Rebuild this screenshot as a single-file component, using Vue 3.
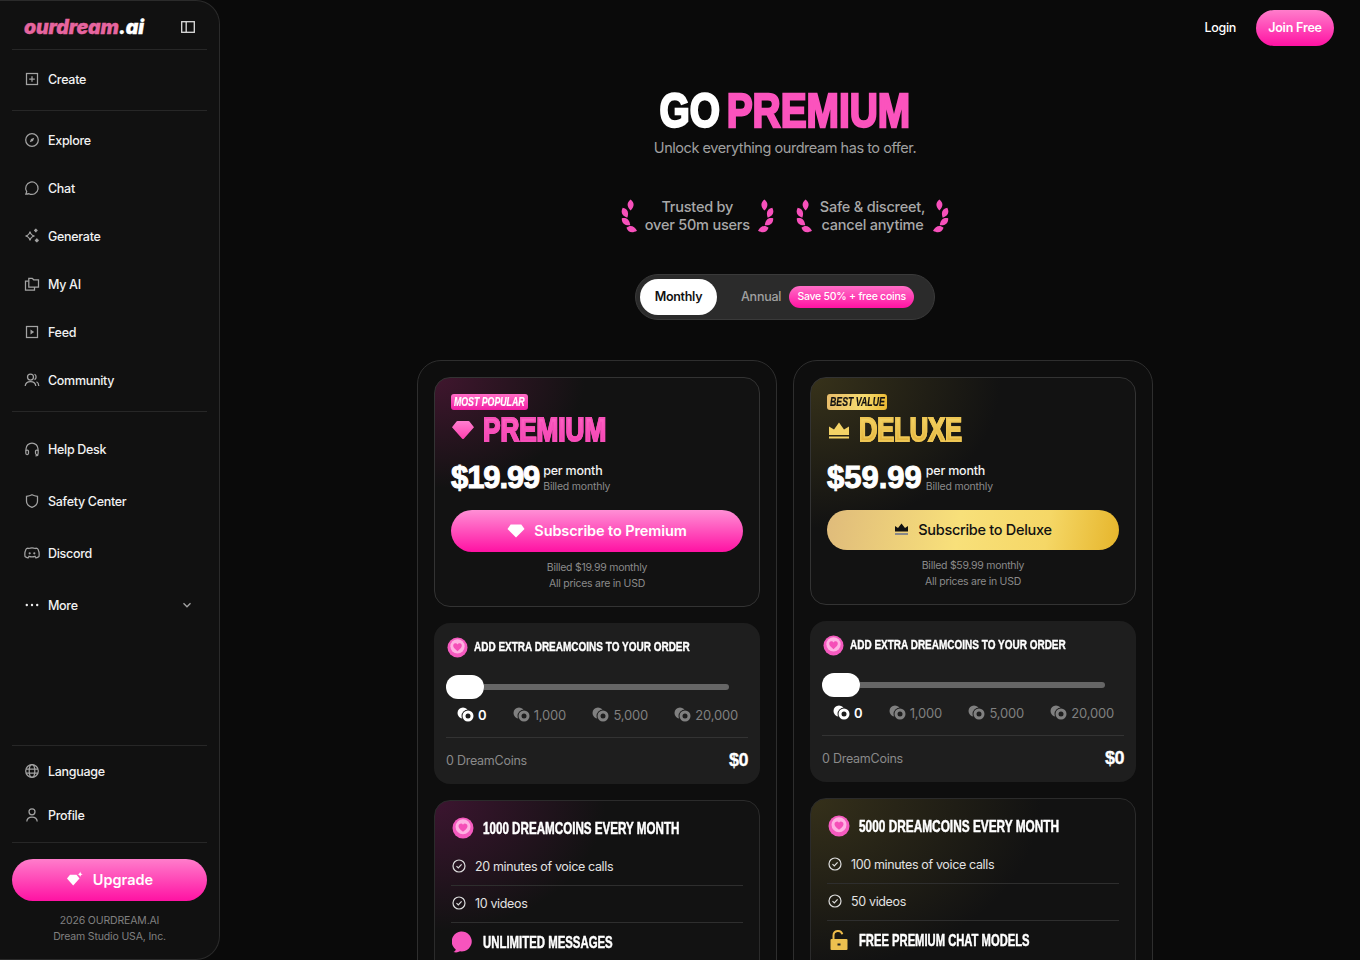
<script setup>
const icons = {
  create: '<rect x="2.5" y="2.5" width="11" height="11"/><path d="M8 5.2v5.6M5.2 8h5.6"/>',
  explore: '<circle cx="8" cy="8" r="6.3"/><path d="M10.2 5.8 9 9 5.8 10.2 7 7Z" fill="#a3a3a3" stroke="none"/>',
  chat: '<path d="M1.8 14.2l.9-2.6A6.2 6.2 0 1 1 5 13.7a9 9 0 0 1-3.2.5Z"/>',
  generate: '<path d="M6 3.500c.5 2.600 1.900 4 4.500 4.500-2.600.5-4 1.900-4.500 4.500C5.500 9.900 4.100 8.500 1.500 8 4.100 7.500 5.500 6.100 6 3.500Z"/><path d="M11.800.8c.1 1.100.6 1.600 1.700 1.700-1.100.1-1.600.6-1.700 1.700-.1-1.100-.6-1.600-1.700-1.700 1.100-.1 1.600-.6 1.700-1.700ZM12.800 10.500c.1 1.200.7 1.800 1.900 1.900-1.200.1-1.800.7-1.900 1.900-.1-1.200-.7-1.800-1.900-1.900 1.200-.1 1.800-.7 1.900-1.900Z" fill="#a3a3a3"/>',
  myai: '<path d="M4.500 5H1.500v9h9v-3"/><path d="M4.800 5V2.300h3.400l1.500 1.500h4.800v7.200H4.800Z"/>',
  feed: '<rect x="2.500" y="2.500" width="11" height="11"/><path d="M6.500 5.500 10.200 8 6.500 10.500Z" fill="#a3a3a3" stroke="none"/>',
  community: '<circle cx="6.500" cy="5" r="3"/><path d="M1.200 14c.3-3 2.300-4.500 5.300-4.500s5 1.500 5.300 4.500"/><path d="M10.500 2.300a3 3 0 0 1 0 5.300M12.500 9.800c1.300.6 2.200 2.100 2.300 4.200"/>',
  help: '<path d="M2 10V8a6 6 0 0 1 12 0v2"/><rect x="1.800" y="9" width="2.700" height="4.500" rx="1.200"/><rect x="11.500" y="9" width="2.700" height="4.500" rx="1.200"/><path d="M14 13.500c0 .9-1 1.300-2.500 1.300"/>',
  safety: '<path d="M8 1.800c1.800 1 3.500 1.400 5.500 1.500v5c0 3-2.300 5-5.500 6-3.200-1-5.500-3-5.500-6v-5c2-.1 3.700-.5 5.500-1.500Z"/>',
  discord: '<path d="M4.800 3.500 4 3.200C3 3.400 2.300 3.800 2 4.300.9 6.500.6 9 1 11.500c1 .9 2 1.300 3 1.500l1-1.700c1.900.6 4.100.6 6 0l1 1.700c1-.2 2-.6 3-1.500.4-2.500.1-5-1-7.200-.3-.5-1-.9-2-1.100l-.8.3a10 10 0 0 0-6.400 0Z"/><circle cx="5.700" cy="8.300" r="1.100" fill="#a3a3a3" stroke="none"/><circle cx="10.300" cy="8.300" r="1.100" fill="#a3a3a3" stroke="none"/>',
  more: '<circle cx="2.800" cy="8" r="1.200" fill="#eee" stroke="none"/><circle cx="8" cy="8" r="1.200" fill="#eee" stroke="none"/><circle cx="13.200" cy="8" r="1.200" fill="#eee" stroke="none"/>',
  language: '<circle cx="8" cy="8" r="6.300"/><ellipse cx="8" cy="8" rx="2.800" ry="6.300"/><path d="M2 6h12M2 10h12"/>',
  profile: '<circle cx="8" cy="4.800" r="3"/><path d="M2.800 14.500c.2-3 2.200-4.500 5.200-4.500s5 1.500 5.200 4.500"/>'
}
const leaf = 'c4 3 4 7 0 11c-4-4-4-8 0-11Z'
const laurel = `<g fill="#f750bb"><path d="M9.600 .6${leaf}"/><path transform="rotate(-25 4 13.700)" d="M4 8.200${leaf}"/><path transform="rotate(-50 5 22.700)" d="M5 17.200${leaf}"/><path transform="rotate(-74 10.700 30.300)" d="M10.700 24.800${leaf}"/></g>`
const group1 = [['create', 'Create']]
const group2 = [['explore', 'Explore'], ['chat', 'Chat'], ['generate', 'Generate'], ['myai', 'My AI'], ['feed', 'Feed'], ['community', 'Community']]
const group3 = [['help', 'Help Desk'], ['safety', 'Safety Center'], ['discord', 'Discord'], ['more', 'More']]
const group4 = [['language', 'Language'], ['profile', 'Profile']]
const trust = [['Trusted by', 'over 50m users'], ['Safe & discreet,', 'cancel anytime']]
const coinStops = ['0', '1,000', '5,000', '20,000']
const plans = [
  { key: 'premium', tag: 'MOST POPULAR', name: 'PREMIUM', price: '$19.99', cta: 'Subscribe to Premium', bill: 'Billed $19.99 monthly', coins: '1000 DREAMCOINS EVERY MONTH', voice: '20 minutes of voice calls', videos: '10 videos', extra: 'UNLIMITED MESSAGES' },
  { key: 'deluxe', tag: 'BEST VALUE', name: 'DELUXE', price: '$59.99', cta: 'Subscribe to Deluxe', bill: 'Billed $59.99 monthly', coins: '5000 DREAMCOINS EVERY MONTH', voice: '100 minutes of voice calls', videos: '50 videos', extra: 'FREE PREMIUM CHAT MODELS' }
]
</script>

<template>
  <div class="app">
    <aside class="side">
      <div class="brand">
        <span class="logo"><span class="logo-pink">ourdream</span>.ai</span>
        <svg class="toggle-ico" width="16" height="16" viewBox="0 0 16 16"><rect x="1.700" y="2.700" width="12.600" height="10.600" fill="none" stroke="#ddd" stroke-width="1.300"/><path d="M6.200 2.700v10.600" stroke="#ddd" stroke-width="1.300"/></svg>
      </div>
      <nav class="sec sec-create">
        <a v-for="n in group1" :key="n[1]" class="item h60"><svg class="ico" viewBox="0 0 16 16" v-html="icons[n[0]]"></svg><span>{{ n[1] }}</span></a>
      </nav>
      <nav class="sec sec-main">
        <a v-for="n in group2" :key="n[1]" class="item h48"><svg class="ico" viewBox="0 0 16 16" v-html="icons[n[0]]"></svg><span>{{ n[1] }}</span></a>
      </nav>
      <nav class="sec-help">
        <a v-for="n in group3" :key="n[1]" class="item h52">
          <svg class="ico" viewBox="0 0 16 16" v-html="icons[n[0]]"></svg><span>{{ n[1] }}</span>
          <svg v-if="n[0] === 'more'" class="chev" width="10" height="10" viewBox="0 0 10 10"><path d="M1.500 3.200 5 6.800l3.500-3.600" fill="none" stroke="#a3a3a3" stroke-width="1.300"/></svg>
        </a>
      </nav>
      <div class="spacer"></div>
      <nav class="sec sec-bottom">
        <a v-for="n in group4" :key="n[1]" class="item h44"><svg class="ico" viewBox="0 0 16 16" v-html="icons[n[0]]"></svg><span>{{ n[1] }}</span></a>
      </nav>
      <button class="upgrade">
        <svg width="18" height="17" viewBox="0 0 18 17"><path d="M1 7.500 4 3.800h6.500l3 3.700-6.300 7Z" fill="#fff"/><path d="M14.200.5c.2 1.700 1 2.500 2.800 2.800-1.800.3-2.600 1.100-2.800 2.800-.3-1.700-1.100-2.500-2.800-2.800 1.700-.3 2.500-1.100 2.800-2.800Z" fill="#fff"/></svg>
        <span>Upgrade</span>
      </button>
      <p class="copy">2026 OURDREAM.AI<br>Dream Studio USA, Inc.</p>
    </aside>

    <main class="main">
      <header class="top">
        <a class="login">Login</a>
        <button class="join">Join Free</button>
      </header>

      <h1 class="title">GO <span class="pink">PREMIUM</span></h1>
      <p class="sub">Unlock everything ourdream has to offer.</p>

      <div class="trust">
        <div v-for="t in trust" :key="t[0]" class="trust-item">
          <svg class="laurel" width="16" height="34" viewBox="0 0 16 34" v-html="laurel"></svg>
          <p>{{ t[0] }}<br>{{ t[1] }}</p>
          <svg class="laurel flip" width="16" height="34" viewBox="0 0 16 34" v-html="laurel"></svg>
        </div>
      </div>

      <div class="period">
        <span class="monthly">Monthly</span>
        <span class="annual">Annual</span>
        <span class="save">Save 50% + free coins</span>
      </div>

      <section class="plans">
        <article v-for="p in plans" :key="p.key" class="plan" :class="p.key">
          <div class="head">
            <span class="tag"><span class="cond">{{ p.tag }}</span></span>
            <div class="name-row">
              <svg v-if="p.key === 'premium'" width="24" height="20" viewBox="0 0 24 20"><defs><linearGradient id="dia" x1="0" y1="0" x2="0" y2="1"><stop offset="0" stop-color="#ff7fd0"/><stop offset="1" stop-color="#ff3fae"/></linearGradient></defs><path d="M1 7.200 5.500 1.500a1.500 1.500 0 0 1 1-.5h11a1.500 1.500 0 0 1 1 .5L23 7.200 13 18.500a1.300 1.300 0 0 1-2 0Z" fill="url(#dia)"/></svg>
              <svg v-else width="24" height="20" viewBox="0 0 24 20"><path d="M2 15 2 6.500 7 9.500 12 2.500 17 9.500 22 6.500 22 15Z" fill="#f2d266"/><rect x="2" y="16.500" width="20" height="2" fill="#f2d266"/></svg>
              <h2 class="name cond">{{ p.name }}</h2>
            </div>
            <div class="price-row">
              <strong class="price">{{ p.price }}</strong>
              <div class="per"><b>per month</b><small>Billed monthly</small></div>
            </div>
            <button class="cta">
              <svg v-if="p.key === 'premium'" width="18" height="14" viewBox="0 0 18 14"><path d="M.5 5 3.700.5h10.600L17.500 5 9 13.500Z" fill="#fff"/></svg>
              <svg v-else width="15" height="13" viewBox="0 0 15 13"><path d="M1 8.500V3l3 2L7.500.5 11 5l3-2v5.500Z" fill="#111"/><rect x="1" y="10" width="13" height="2" fill="#888"/></svg>
              <span>{{ p.cta }}</span>
            </button>
            <p class="note">{{ p.bill }}<br>All prices are in USD</p>
          </div>

          <div class="addon">
            <div class="addon-title">
              <svg class="coin" width="21" height="21" viewBox="0 0 22 22"><circle cx="11" cy="11" r="10.500" fill="#f55abf"/><circle cx="11" cy="9.800" r="7.500" fill="#ffb0e2"/><path d="M11 14.800C7.500 12.300 6.500 10.500 6.500 9a2.400 2.400 0 0 1 4.500-1.200A2.400 2.400 0 0 1 15.500 9c0 1.500-1 3.300-4.500 5.800Z" fill="#f54fb8"/></svg>
              <span class="cond">ADD EXTRA DREAMCOINS TO YOUR ORDER</span>
            </div>
            <div class="slider"><i class="knob"></i><i class="track"></i></div>
            <div class="stops">
              <span v-for="(s, i) in coinStops" :key="s" class="stop" :class="{ on: i === 0 }">
                <svg width="17" height="15" viewBox="0 0 17 15"><circle cx="6" cy="6" r="5.500" fill="currentColor"/><circle cx="11" cy="9" r="6.500" fill="#1e1e1e"/><circle cx="11" cy="9" r="5.500" fill="currentColor"/><circle cx="11" cy="9" r="2.500" fill="#1e1e1e"/></svg>
                {{ s }}
              </span>
            </div>
            <div class="total"><span>0 DreamCoins</span><strong>$0</strong></div>
          </div>

          <div class="perks">
            <div class="perk-title first">
              <svg class="coin" width="22" height="22" viewBox="0 0 22 22"><circle cx="11" cy="11" r="10.500" fill="#f55abf"/><circle cx="11" cy="9.800" r="7.500" fill="#ffb0e2"/><path d="M11 14.800C7.500 12.300 6.500 10.500 6.500 9a2.400 2.400 0 0 1 4.500-1.200A2.400 2.400 0 0 1 15.500 9c0 1.500-1 3.300-4.500 5.800Z" fill="#f54fb8"/></svg>
              <span class="cond">{{ p.coins }}</span>
            </div>
            <div class="perk"><svg width="14" height="14" viewBox="0 0 14 14"><circle cx="7" cy="7" r="6" fill="none" stroke="#ddd" stroke-width="1.200"/><path d="M4.500 7.200 6.300 9l3.300-3.600" fill="none" stroke="#ddd" stroke-width="1.200"/></svg>{{ p.voice }}</div>
            <div class="perk"><svg width="14" height="14" viewBox="0 0 14 14"><circle cx="7" cy="7" r="6" fill="none" stroke="#ddd" stroke-width="1.200"/><path d="M4.500 7.200 6.300 9l3.300-3.600" fill="none" stroke="#ddd" stroke-width="1.200"/></svg>{{ p.videos }}</div>
            <div class="perk-title extra">
              <svg v-if="p.key === 'premium'" width="22" height="22" viewBox="0 0 22 22"><path d="M1.500 21c1.300-.6 2-1.500 2.300-2.500A10 10 0 1 1 8 20.300 8 8 0 0 1 1.500 21Z" fill="#f754bd"/></svg>
              <svg v-else width="22" height="22" viewBox="0 0 22 22"><path d="M5.500 10V6.500a4.500 4.500 0 0 1 8.800-1.300" fill="none" stroke="#eebc4a" stroke-width="2"/><rect x="2.500" y="10" width="17" height="11" rx="1" fill="#ecc04f"/><rect x="9.500" y="14.500" width="3" height="2" fill="#222"/></svg>
              <span class="cond">{{ p.extra }}</span>
            </div>
          </div>
        </article>
      </section>
    </main>
  </div>
</template>

<style>
html, body { margin: 0; background: #0a0a0a; }
</style>

<style scoped>
.app { display: flex; height: 960px; overflow: hidden; background: #0a0a0a; color: #fff; font-family: Inter, "Liberation Sans", sans-serif; }
.side { box-sizing: border-box; width: 220px; height: 960px; flex: none; display: flex; flex-direction: column; padding: 0 12px; background: #111; border: 1px solid #2b2b2b; border-left: 0; border-radius: 0 24px 24px 0; }
.brand { box-sizing: border-box; height: 49px; display: flex; align-items: center; justify-content: space-between; padding: 4px 11px 0 12px; border-bottom: 1px solid #272727; }
.logo { font-size: 19.500px; font-weight: 900; font-style: italic; letter-spacing: -.15px; color: #fff; white-space: nowrap; -webkit-text-stroke: .3px currentColor; }
.logo-pink { color: #e6659f; }
.sec { border-bottom: 1px solid #272727; }
.item { display: flex; align-items: center; gap: 8px; padding-left: 12px; font-size: 12.500px; font-weight: 500; letter-spacing: -.3px; color: #f2f2f2; }
.h60 { box-sizing: border-box; height: 60px; padding-bottom: 2px; }
.h48 { height: 48px; }
.h52 { height: 52px; }
.h44 { height: 44px; }
.sec-main { padding: 5px 0 7px; }
.sec-help { padding-top: 11px; }
.sec-bottom { border-top: 1px solid #272727; padding: 3px 0 5px; }
.sec-bottom + .upgrade { margin-top: 16px; }
.ico { width: 16px; height: 16px; flex: none; fill: none; stroke: #a3a3a3; stroke-width: 1.250; }
.chev { margin-left: auto; margin-right: 15px; }
.spacer { flex: 1; }
.upgrade { box-sizing: border-box; height: 42px; border: 0; border-radius: 21px; display: flex; align-items: center; justify-content: center; gap: 9px; padding: 0 0 2px; background: linear-gradient(180deg, #ff7dcb, #ff12a3); color: #fff; font: 600 14.500px Inter, sans-serif; flex: none; }
.copy { margin: 12px 0 14px; text-align: center; font-size: 10.500px; line-height: 16px; color: #808080; letter-spacing: -.15px; }

.main { flex: 1; display: flex; flex-direction: column; align-items: center; padding-right: 10px; }
.top { align-self: stretch; height: 56px; display: flex; align-items: center; justify-content: flex-end; gap: 20px; padding: 0 16px 0 0; box-sizing: border-box; flex: none; }
.login { font-size: 12.500px; font-weight: 500; letter-spacing: -.3px; padding-bottom: 1px; }
.join { width: 78px; height: 36px; border: 0; border-radius: 18px; background: linear-gradient(180deg, #ff7dcb, #ff12a3); color: #fff; font: 600 12.500px Inter, sans-serif; letter-spacing: -.2px; padding: 0 0 1px; }
.title { margin: 30px 0 0; font: 700 48px/50px "Liberation Sans", sans-serif; word-spacing: -5px; -webkit-text-stroke: 2.400px currentColor; transform: scaleX(.81); white-space: nowrap; }
.pink { color: #fb53bd; }
.sub { margin: 2px 0 0; font-size: 14.500px; line-height: 20px; color: #a0a0a0; letter-spacing: -.45px; }
.trust { display: flex; gap: 22px; margin-top: 40px; }
.trust-item { display: flex; align-items: center; gap: 8px; }
.trust-item p { margin: 0; font-size: 14.500px; line-height: 18px; color: #a8a8a8; text-align: center; font-weight: 500; white-space: nowrap; letter-spacing: -.22px; }
.flip { transform: scaleX(-1); }
.period { box-sizing: border-box; margin-top: 40px; width: 300px; height: 46px; display: flex; align-items: center; padding: 0 4px; background: #2b2b2b; border: 1px solid #3a3a3a; border-radius: 23px; flex: none; }
.monthly { box-sizing: border-box; width: 77px; height: 36px; padding-bottom: 1px; border-radius: 18px; background: #fff; color: #111; font-size: 12.500px; font-weight: 600; letter-spacing: -.3px; display: flex; align-items: center; justify-content: center; }
.annual { margin-left: 24px; padding-bottom: 1px; font-size: 12.500px; font-weight: 500; color: #a0a0a0; letter-spacing: -.25px; }
.save { box-sizing: border-box; margin-left: 8px; width: 125px; height: 22px; padding-bottom: 1px; border-radius: 11px; background: linear-gradient(180deg, #ff6ec6, #ff12a3); font-size: 10.500px; font-weight: 500; letter-spacing: -.25px; display: flex; align-items: center; justify-content: center; }

.cond { display: inline-block; white-space: nowrap; transform-origin: left center; }
.plans { margin-top: 40px; display: grid; grid-template-columns: 360px 360px; gap: 16px; align-items: start; flex: none; }
.plan { box-sizing: border-box; padding: 16px; background: #0e0e0e; border: 1px solid #2e2e2e; border-radius: 24px; height: 720px; display: flex; flex-direction: column; gap: 16px; }
.head { padding: 16px 16px 0; border: 1px solid #333; border-radius: 16px; background-color: #121212; flex: none; }
.premium .head { height: 230px; box-sizing: border-box; background-image: radial-gradient(150px 110px at 0 0, #40162e, transparent); }
.deluxe .head { height: 228px; box-sizing: border-box; background-image: radial-gradient(190px 150px at 0 0, #37321a, transparent); }
.tag { display: block; height: 16px; padding: 0 3px; border-radius: 3px; font: italic 700 12px/16px "Liberation Sans", sans-serif; overflow: hidden; box-sizing: border-box; }
.tag .cond { transform: scaleX(.73); -webkit-text-stroke: .2px currentColor; }
.premium .tag { width: 77px; background: linear-gradient(180deg, #ff6ec6, #f21fa5); color: #fff; }
.deluxe .tag { width: 60px; background: linear-gradient(100deg, #e6bb6a, #f7dc70 60%, #e9b730); color: #111; }
.name-row { display: flex; align-items: center; gap: 8px; height: 30px; margin-top: 5px; }
.name { margin: 0; font: 700 33px/30px "Liberation Sans", sans-serif; background-clip: text; -webkit-background-clip: text; color: transparent; }
.premium .name { transform: scaleX(.79); background-image: linear-gradient(180deg, #ff66c4, #f13fb0); -webkit-text-stroke: 1.800px #f74fb9; }
.deluxe .name { transform: scaleX(.77); background-image: linear-gradient(180deg, #f5d76a, #e0ad35); -webkit-text-stroke: 1.800px #eec654; }
.price-row { display: flex; align-items: center; gap: 4px; height: 36px; margin-top: 15px; }
.price { font: 700 31px/36px "Liberation Sans", sans-serif; letter-spacing: -1.100px; -webkit-text-stroke: 1px #fff; }
.deluxe .price { letter-spacing: 0; }
.per { display: flex; flex-direction: column; }
.per b { font-size: 12.500px; font-weight: 500; line-height: 16px; color: #f2f2f2; letter-spacing: -.22px; }
.per small { font-size: 10.500px; line-height: 15px; color: #8a8a8a; letter-spacing: -.2px; }
.cta { width: 292px; border: 0; border-radius: 21px; display: flex; align-items: center; justify-content: center; gap: 9px; margin-top: 14px; padding: 0 0 1px; }
.premium .cta { height: 42px; background: linear-gradient(180deg, #ff8fd5, #ff12a3); color: #fff; font: 600 14.500px Inter, sans-serif; letter-spacing: -.1px; }
.deluxe .cta { height: 40px; background: linear-gradient(100deg, #dfbb7b, #f8e07a 45%, #f5d766 75%, #e6b52b); color: #111; font: 500 14.500px Inter, sans-serif; letter-spacing: -.3px; }
.note { margin: 8px 0 0; text-align: center; font-size: 10.500px; line-height: 16px; color: #8a8a8a; letter-spacing: -.27px; }
.addon { box-sizing: border-box; height: 161px; padding: 12px 12px 0; border-radius: 16px; background: #1e1e1e; flex: none; }
.addon-title { display: flex; align-items: center; gap: 5px; height: 24px; font: 700 13.500px/24px "Liberation Sans", sans-serif; }
.addon-title .cond { transform: scaleX(.74); -webkit-text-stroke: .4px #fff; }
.addon-title .coin { margin-left: 1px; margin-right: 1px; flex: none; }
.slider { display: flex; align-items: center; height: 24px; margin-top: 16px; padding-right: 19px; }
.knob { width: 38px; height: 24px; border-radius: 12px; background: #fff; flex: none; }
.track { flex: 1; height: 6px; background: #666; border-radius: 0 3px 3px 0; }
.stops { display: flex; justify-content: space-between; padding: 0 10px 0 11px; margin-top: 6px; height: 19px; align-items: center; }
.stop { display: flex; align-items: center; gap: 4px; font-size: 13px; color: #808080; letter-spacing: -.2px; }
.stop.on { color: #fff; font-weight: 600; }
.total { display: flex; align-items: center; justify-content: space-between; margin-top: 13px; border-top: 1px solid #333; height: 45px; font-size: 12.500px; color: #8a8a8a; letter-spacing: -.25px; }
.total strong { font: 700 18px "Liberation Sans", sans-serif; color: #fff; letter-spacing: -.5px; -webkit-text-stroke: .3px #fff; }
.perks { padding: 0 16px; border: 1px solid #2b2b2b; border-radius: 16px; background-color: #121212; flex: 1; }
.premium .perks { background-image: radial-gradient(170px 130px at 0 0, #3c1530, transparent); }
.deluxe .perks { background-image: radial-gradient(230px 170px at 0 0, #35301a, transparent); }
.perk-title { display: flex; align-items: center; gap: 10px; font: 700 16.500px/22px "Liberation Sans", sans-serif; height: 40px; }
.perk-title svg { flex: none; margin-left: 1px; }
.perk-title .cond { transform: scaleX(.705); -webkit-text-stroke: .5px #fff; margin-left: -1px; }
.deluxe .first .cond { transform: scaleX(.718); }
.premium .extra .cond { transform: scaleX(.69); }
.deluxe .extra .cond { transform: scaleX(.68); }
.perk-title.first { box-sizing: border-box; height: 48px; padding-top: 6px; }
.perk-title.extra { box-sizing: border-box; padding-bottom: 2px; }
.perk { box-sizing: border-box; display: flex; align-items: center; gap: 9px; height: 37px; padding: 0 0 2px 1px; border-bottom: 1px solid #2e2e2e; font-size: 12.500px; color: #e2e2e2; letter-spacing: -.35px; }
</style>
